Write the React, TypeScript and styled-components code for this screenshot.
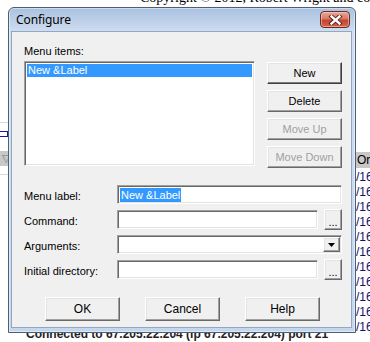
import React from 'react';
import styled, {createGlobalStyle, css} from "styled-components";

const GlobalStyle = createGlobalStyle`
  html, body {
    margin: 0;
    padding: 0;
    background: #fff;
  }
`

const ui = `"Liberation Sans", Arial, sans-serif`;

const raised = css`
  border: 1px solid;
  border-color: #fff #696969 #696969 #fff;
  box-shadow: inset -1px -1px 0 #a0a0a0, inset 1px 1px 0 #e3e3e3;
  background: #f0f0f0;
`

const sunken = css`
  border: 1px solid;
  border-color: #a0a0a0 #fff #fff #a0a0a0;
  box-shadow: inset 1px 1px 0 #696969, inset -1px -1px 0 #e3e3e3;
  background: #fff;
`

const rows = Array.from({length: 12});

export default function App() {
    return (
        <>
            <GlobalStyle/>
            <Desktop>
                <Backdrop>
                    <CopyrightLine><span>Copyright © 2012, Robert Wright and contributors</span></CopyrightLine>
                    <LeftStrip>
                        <ThinRule/>
                        <SelectedCell/>
                        <HeaderCell>▽</HeaderCell>
                        <ThinRule/>
                    </LeftStrip>
                    <RightColumn>
                        <ColumnHeader>Ori</ColumnHeader>
                        {rows.map((_, i) => <ColumnRow key={i}>/16</ColumnRow>)}
                    </RightColumn>
                    <StatusLine><span>Connected to 67.205.22.204 (ip 67.205.22.204) port 21</span></StatusLine>
                </Backdrop>

                <Window>
                    <TitleBar>
                        <Title>Configure</Title>
                        <CloseButton>
                            <svg width="15" height="10" viewBox="0 0 15 10">
                                <path d="M3.5 1.5 L11.5 8.5 M11.5 1.5 L3.5 8.5" stroke="#5a2018" strokeWidth="4.2" strokeLinecap="square"/>
                                <path d="M3.5 1.5 L11.5 8.5 M11.5 1.5 L3.5 8.5" stroke="#fff" strokeWidth="2.4" strokeLinecap="square"/>
                            </svg>
                        </CloseButton>
                    </TitleBar>
                    <Body>
                        <TopSection>
                            <ListColumn>
                                <Label>Menu items:</Label>
                                <ListBox>
                                    <ListItem selected>New &amp;Label</ListItem>
                                </ListBox>
                            </ListColumn>
                            <ButtonColumn>
                                <SideButton isDefault>New</SideButton>
                                <SideButton>Delete</SideButton>
                                <SideButton disabled>Move Up</SideButton>
                                <SideButton disabled>Move Down</SideButton>
                            </ButtonColumn>
                        </TopSection>

                        <Form>
                            <FieldLabel>Menu label:</FieldLabel>
                            <Field>
                                <TextBox><Selection>New &amp;Label</Selection></TextBox>
                            </Field>

                            <FieldLabel>Command:</FieldLabel>
                            <Field>
                                <TextBox/>
                                <BrowseButton>...</BrowseButton>
                            </Field>

                            <FieldLabel>Arguments:</FieldLabel>
                            <Field>
                                <ComboBox>
                                    <ComboText/>
                                    <DropButton>
                                        <svg width="7" height="4" viewBox="0 0 7 4">
                                            <path d="M0 0 H7 L3.5 4 Z" fill="#000"/>
                                        </svg>
                                    </DropButton>
                                </ComboBox>
                            </Field>

                            <FieldLabel>Initial directory:</FieldLabel>
                            <Field>
                                <TextBox/>
                                <BrowseButton>...</BrowseButton>
                            </Field>
                        </Form>

                        <Footer>
                            <FooterButton>OK</FooterButton>
                            <FooterButton>Cancel</FooterButton>
                            <FooterButton>Help</FooterButton>
                        </Footer>
                    </Body>
                </Window>
            </Desktop>
        </>
    )
}

const Desktop = styled.div`
  position: relative;
  width: 370px;
  height: 342px;
  overflow: hidden;
  background: #fff;
  font-family: ${ui};
`

const Backdrop = styled.div`
  display: grid;
  grid-template-columns: 8px 1fr 14px;
  grid-template-rows: 7px 1fr 9px;
  height: 100%;
`

const CopyrightLine = styled.div`
  grid-column: 1 / -1;
  overflow: hidden;
  padding-left: 140px;
  white-space: nowrap;
  font-family: "Liberation Serif", "Times New Roman", serif;
  font-size: 14px;

  span {
    display: block;
    line-height: 16px;
    margin-top: -10px;
  }
`

const LeftStrip = styled.div`
  grid-column: 1;
  display: flex;
  flex-direction: column;
  padding-top: 115px;
  gap: 8px;
`

const ThinRule = styled.div`
  height: 1px;
  background: #d8d8d8;
`

const SelectedCell = styled.div`
  height: 4px;
  border: 1px solid #1b1b8c;
  border-left: none;
  background: #fff;
`

const HeaderCell = styled.div`
  height: 15px;
  margin-top: 6px;
  background: #c8c8c8;
  color: #777;
  font-size: 11px;
  line-height: 15px;
  overflow: hidden;
  text-indent: 2px;
`

const RightColumn = styled.div`
  grid-column: 3;
  padding-top: 145px;
  overflow: hidden;
  white-space: nowrap;
`

const ColumnHeader = styled.div`
  height: 16px;
  background: #c8c8c8;
  font-size: 12px;
  line-height: 16px;
  padding-left: 1px;
  color: #000;
  margin-bottom: 2px;
`

const ColumnRow = styled.div`
  font-size: 12px;
  line-height: 15px;
  color: #10106a;
`

const StatusLine = styled.div`
  grid-column: 1 / -1;
  overflow: hidden;
  padding-left: 26px;
  white-space: nowrap;
  font-size: 12px;
  font-weight: bold;
  color: #222;

  span {
    display: block;
    line-height: 14px;
    margin-top: -6px;
  }
`

const Window = styled.div`
  position: absolute;
  left: 8px;
  top: 7px;
  width: 348px;
  height: 326px;
  box-sizing: border-box;
  display: flex;
  flex-direction: column;
  border: 1px solid #4e5f74;
  border-radius: 6px 6px 0 0;
  padding: 0 3px 4px 2px;
  background: linear-gradient(#a9c1e0 0, #d0def0 24px, #c4d7ee 100%);
  box-shadow: inset 0 0 0 1px rgba(255, 255, 255, 0.45);
`

const TitleBar = styled.div`
  height: 23px;
  display: flex;
  align-items: center;
  padding-left: 5px;
`

const Title = styled.span`
  font-family: "Noto Sans", "Open Sans", sans-serif;
  font-size: 12px;
  color: #000;
  letter-spacing: -0.1px;
`

const CloseButton = styled.div`
  margin-left: auto;
  margin-right: 2px;
  width: 30px;
  height: 17px;
  box-sizing: border-box;
  display: flex;
  align-items: center;
  justify-content: center;
  border: 1px solid #6e2a20;
  border-radius: 4px;
  background: linear-gradient(#e7a899 0, #d77a66 45%, #c24530 55%, #d2644c 100%);
  box-shadow: inset 0 0 0 1px rgba(255, 220, 210, 0.5);
`

const Body = styled.div`
  flex: 1;
  display: flex;
  flex-direction: column;
  border: 1px solid #91a7c2;
  background: #f0f0f0;
  padding: 13px 9px 0 12px;
`

const TopSection = styled.div`
  display: flex;
  gap: 12px;
`

const ListColumn = styled.div`
  width: 231px;
  display: flex;
  flex-direction: column;
  gap: 3px;
`

const Label = styled.div`
  font-size: 11px;
  line-height: 13px;
  color: #000;
`

const ListBox = styled.div`
  ${sunken};
  height: 105px;
  box-sizing: border-box;
  padding: 2px;
`

const ListItem = styled.div<{ selected?: boolean }>`
  font-size: 11px;
  line-height: 13px;
  padding-left: 1px;
  color: ${props => props.selected ? '#fff' : '#000'};
  background: ${props => props.selected ? '#3399ff' : 'transparent'};
`

const ButtonColumn = styled.div`
  width: 75px;
  display: flex;
  flex-direction: column;
  gap: 6px;
  padding-top: 17px;
`

const buttonBase = css<{ disabled?: boolean }>`
  ${raised};
  box-sizing: border-box;
  font-family: ${ui};
  font-size: 11px;
  color: ${props => props.disabled ? '#a0a0a0' : '#000'};
  padding: 0;
  cursor: default;
`

const SideButton = styled.button<{ isDefault?: boolean }>`
  ${buttonBase};
  height: 22px;
  ${props => props.isDefault && css`
    border-color: #fff #404040 #404040 #fff;
    box-shadow: inset -1px -1px 0 #7a7a7a, inset 1px 1px 0 #e3e3e3;
  `}
`

const Form = styled.div`
  display: grid;
  grid-template-columns: 93px 1fr;
  grid-auto-rows: 19px;
  row-gap: 6px;
  margin-top: 17px;
`

const FieldLabel = styled.div`
  font-size: 11px;
  line-height: 13px;
  padding-top: 5px;
  white-space: nowrap;
`

const Field = styled.div`
  display: flex;
  align-items: center;
  gap: 6px;
`

const TextBox = styled.div`
  ${sunken};
  flex: 1;
  height: 19px;
  box-sizing: border-box;
  display: flex;
  align-items: center;
  padding-left: 2px;
`

const Selection = styled.span`
  background: #3399ff;
  color: #fff;
  font-size: 11px;
  line-height: 14px;
  padding: 0 1px;
`

const BrowseButton = styled.button`
  ${buttonBase};
  width: 18px;
  height: 21px;
  line-height: 12px;
  padding-top: 4px;
`

const ComboBox = styled.div`
  ${sunken};
  flex: 1;
  height: 19px;
  box-sizing: border-box;
  display: flex;
  padding: 1px;
`

const ComboText = styled.div`
  flex: 1;
`

const DropButton = styled.div`
  ${raised};
  width: 17px;
  box-sizing: border-box;
  display: flex;
  align-items: center;
  justify-content: center;
`

const Footer = styled.div`
  display: flex;
  justify-content: center;
  gap: 25px;
  margin-top: 18px;
  padding-right: 1px;
`

const FooterButton = styled.button`
  ${buttonBase};
  width: 75px;
  height: 24px;
  font-size: 12px;
`
